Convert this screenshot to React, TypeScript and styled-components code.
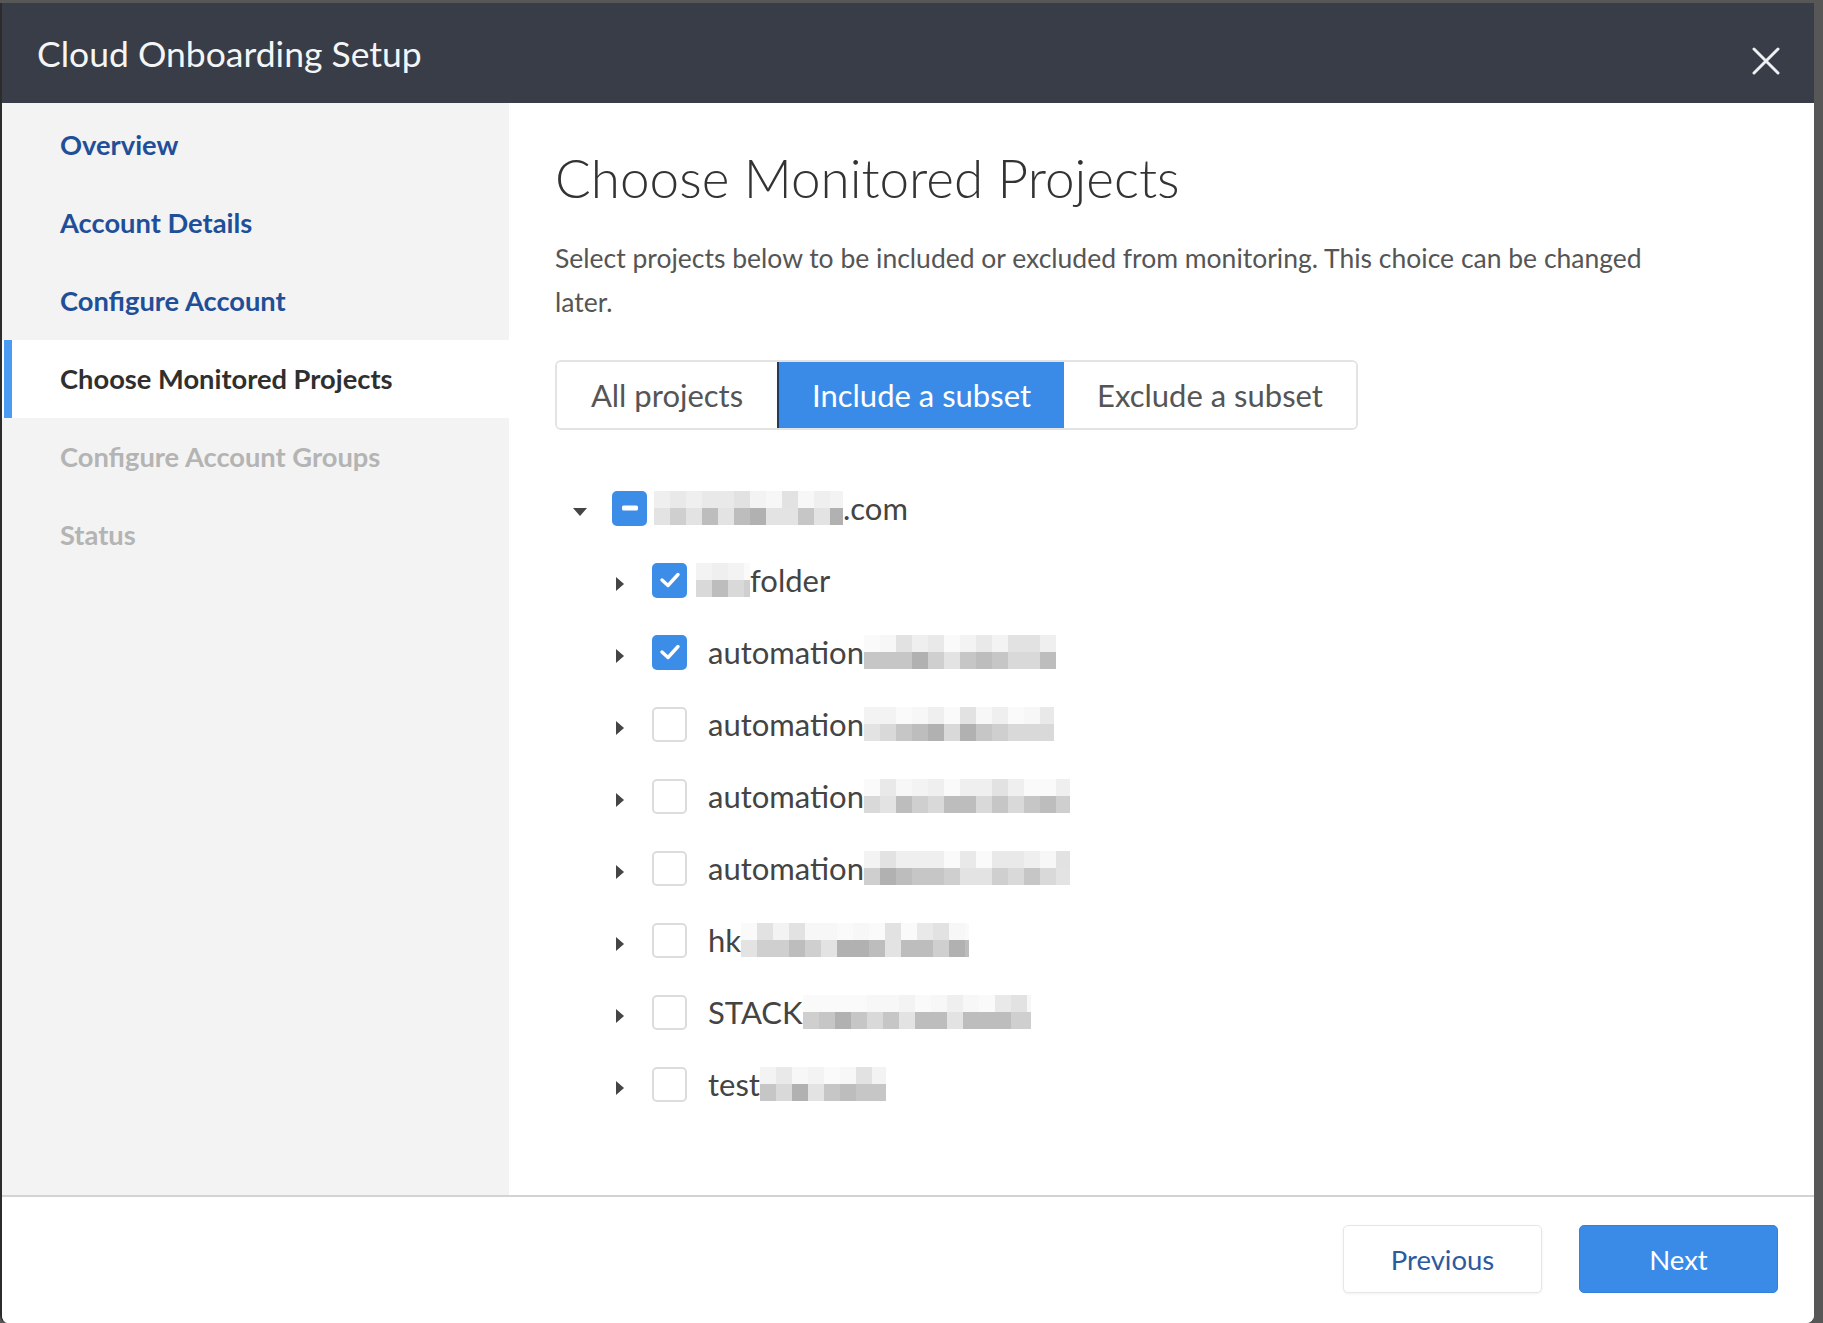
import React from "react";
import styled, { createGlobalStyle, css } from "styled-components";

const GlobalStyle = createGlobalStyle`
  html, body { margin: 0; padding: 0; }
  body {
    background: #575757;
    font-family: Lato, "Open Sans", "Liberation Sans", sans-serif;
    -webkit-font-smoothing: antialiased;
  }
  * { box-sizing: border-box; }
`;

const Backdrop = styled.div`
  width: 1823px;
  height: 1323px;
  padding-top: 3px;
  background: #575757;
  overflow: hidden;
`;

const Dialog = styled.div`
  width: 1814px;
  height: 1320px;
  display: flex;
  flex-direction: column;
  background: #ffffff;
  border-left: 2px solid #2c2c2c;
  border-radius: 0 0 8px 8px;
  overflow: hidden;
`;

const Header = styled.header`
  height: 100px;
  flex: none;
  display: flex;
  align-items: center;
  justify-content: space-between;
  padding: 0 34px 0 35px;
  background: #383d47;
`;

const Title = styled.h1`
  margin: 0;
  font-size: 35.5px;
  font-weight: 400;
  color: #f4f5f7;
`;

const CloseButton = styled.button`
  border: 0;
  padding: 0;
  margin-top: 16px;
  background: transparent;
  width: 28px;
  height: 28px;
  display: flex;
  align-items: center;
  justify-content: center;
  cursor: pointer;
`;

const Body = styled.div`
  flex: 1;
  display: flex;
  min-height: 0;
`;

const Sidebar = styled.nav`
  width: 507px;
  flex: none;
  padding-top: 3px;
  background: #f3f3f3;
  display: flex;
  flex-direction: column;
`;

type NavState = "link" | "active" | "disabled";

const NavItem = styled.div<{ $state: NavState }>`
  position: relative;
  height: 78px;
  display: flex;
  align-items: center;
  padding-left: 58px;
  padding-bottom: 1px;
  font-size: 27.3px;
  font-weight: 700;
  color: ${(p) =>
    p.$state === "active" ? "#2f2f2f" : p.$state === "disabled" ? "#b4b4b4" : "#1f4f98"};
  ${(p) =>
    p.$state === "active" &&
    css`
      background: #ffffff;
      &::before {
        content: "";
        position: absolute;
        left: 2px;
        top: 0;
        bottom: 0;
        width: 8px;
        background: #4c9bf3;
      }
    `}
`;

const Main = styled.main`
  flex: 1;
  padding: 43px 46px 0 46px;
  background: #ffffff;
`;

const PageTitle = styled.h2`
  margin: 0;
  font-size: 53px;
  line-height: 64px;
  font-weight: 300;
  color: #333333;
`;

const Description = styled.p`
  margin: 26px 0 0;
  width: 1120px;
  font-size: 26.5px;
  line-height: 44px;
  color: #555555;
`;

const Segmented = styled.div`
  margin-top: 36px;
  display: inline-flex;
  border: 2px solid #e3e3e3;
  border-radius: 6px;
  overflow: hidden;
`;

const Segment = styled.button<{ $selected?: boolean; $w: number }>`
  height: 66px;
  width: ${(p) => p.$w}px;
  border: 0;
  padding: 0;
  font-family: inherit;
  font-size: 31px;
  color: #555555;
  background: #ffffff;
  ${(p) =>
    p.$selected &&
    css`
      background: #3a8be8;
      color: #ffffff;
      border-left: 2px solid #243a5c;
    `}
`;

const Tree = styled.div`
  margin-top: 42px;
  display: flex;
  flex-direction: column;
`;

const Row = styled.div<{ $indent: number }>`
  height: 72px;
  display: flex;
  align-items: center;
  padding-left: ${(p) => p.$indent}px;
`;

const CaretBox = styled.span`
  width: 20px;
  height: 20px;
  margin-top: 8px;
  display: flex;
  align-items: center;
  justify-content: center;
  flex: none;
`;

const Box = styled.span<{ $on: boolean }>`
  width: 35px;
  height: 35px;
  flex: none;
  margin-left: 22px;
  border-radius: 5px;
  display: flex;
  align-items: center;
  justify-content: center;
  ${(p) =>
    p.$on
      ? css`
          background: #3b8de8;
        `
      : css`
          background: #ffffff;
          border: 2px solid #dcdcdc;
        `}
`;

const Label = styled.span<{ $gap: number }>`
  margin-left: ${(p) => p.$gap}px;
  display: flex;
  align-items: center;
  font-size: 31px;
  color: #444444;
  white-space: nowrap;
`;

const MosaicSvg = styled.svg`
  display: block;
  flex: none;
`;

const Footer = styled.footer`
  height: 128px;
  flex: none;
  border-top: 2px solid #d3d3d3;
  display: flex;
  justify-content: flex-end;
  gap: 37px;
  padding: 28px 36px 0 0;
  background: #ffffff;
`;

const FooterButton = styled.button<{ $primary?: boolean }>`
  width: 199px;
  height: 68px;
  border-radius: 5px;
  font-family: inherit;
  font-size: 27.5px;
  cursor: pointer;
  ${(p) =>
    p.$primary
      ? css`
          background: #3a8be8;
          color: #ffffff;
          border: 1px solid #3380dc;
        `
      : css`
          background: #ffffff;
          color: #2c5a9e;
          border: 1px solid #e6e6e6;
          box-shadow: 0 1px 3px rgba(0, 0, 0, 0.06);
        `}
`;

const Caret = ({ open }: { open: boolean }) =>
  open ? (
    <svg width="14" height="8" viewBox="0 0 14 8">
      <polygon points="0,0 14,0 7,8" fill="#454545" />
    </svg>
  ) : (
    <svg width="8" height="14" viewBox="0 0 8 14">
      <polygon points="0,0 8,7 0,14" fill="#454545" />
    </svg>
  );

type CheckState = "on" | "off" | "mixed";

const Check = ({ state }: { state: CheckState }) => (
  <Box $on={state !== "off"}>
    {state === "on" && (
      <svg width="22" height="18" viewBox="0 0 22 18">
        <polyline
          points="3,9 9,14.5 19,3.5"
          fill="none"
          stroke="#ffffff"
          strokeWidth="3.4"
          strokeLinecap="round"
          strokeLinejoin="round"
        />
      </svg>
    )}
    {state === "mixed" && (
      <svg width="16" height="6" viewBox="0 0 16 6">
        <rect x="0" y="0.5" width="16" height="5" rx="1.5" fill="#ffffff" />
      </svg>
    )}
  </Box>
);

const Mosaic = ({ width, seed }: { width: number; seed: number }) => {
  const cell = 16;
  const cols = Math.ceil(width / cell);
  let s = seed * 9301 + 49297;
  const rnd = () => {
    s = (s * 9301 + 49297) % 233280;
    return s / 233280;
  };
  const top = ["#f7f7f7", "#efefef", "#e9e9e9", "#f3f3f3", "#e2e2e2", "#fafafa"];
  const bottom = ["#d9d9d9", "#c6c6c6", "#bdbdbd", "#cfcfcf", "#b1b1b1", "#e3e3e3"];
  const rects: React.ReactNode[] = [];
  for (let i = 0; i < cols; i++) {
    rects.push(
      <rect key={`t${i}`} x={i * cell} y={0} width={cell} height={17} fill={top[Math.floor(rnd() * top.length)]} />
    );
    rects.push(
      <rect key={`b${i}`} x={i * cell} y={17} width={cell} height={17} fill={bottom[Math.floor(rnd() * bottom.length)]} />
    );
  }
  return (
    <MosaicSvg width={width} height={34} viewBox={`0 0 ${width} 34`}>
      {rects}
    </MosaicSvg>
  );
};

type TreeItem = {
  indent: number;
  open: boolean;
  state: CheckState;
  gap: number;
  before?: number;
  text: string;
  after?: number;
  seed: number;
};

const items: TreeItem[] = [
  { indent: 15, open: true, state: "mixed", gap: 7, before: 189, text: ".com", seed: 3 },
  { indent: 55, open: false, state: "on", gap: 9, before: 54, text: "folder", seed: 7 },
  { indent: 55, open: false, state: "on", gap: 21, text: "automation", after: 192, seed: 11 },
  { indent: 55, open: false, state: "off", gap: 21, text: "automation", after: 190, seed: 13 },
  { indent: 55, open: false, state: "off", gap: 21, text: "automation", after: 206, seed: 17 },
  { indent: 55, open: false, state: "off", gap: 21, text: "automation", after: 206, seed: 19 },
  { indent: 55, open: false, state: "off", gap: 21, text: "hk", after: 228, seed: 23 },
  { indent: 55, open: false, state: "off", gap: 21, text: "STACK", after: 228, seed: 29 },
  { indent: 55, open: false, state: "off", gap: 21, text: "test", after: 126, seed: 31 },
];

const navItems: { label: string; state: NavState }[] = [
  { label: "Overview", state: "link" },
  { label: "Account Details", state: "link" },
  { label: "Configure Account", state: "link" },
  { label: "Choose Monitored Projects", state: "active" },
  { label: "Configure Account Groups", state: "disabled" },
  { label: "Status", state: "disabled" },
];

export default function App() {
  return (
    <>
      <GlobalStyle />
      <Backdrop>
        <Dialog>
          <Header>
            <Title>Cloud Onboarding Setup</Title>
            <CloseButton aria-label="Close">
              <svg width="28" height="28" viewBox="0 0 28 28">
                <path d="M2 2 L26 26 M26 2 L2 26" stroke="#eef0f3" strokeWidth="3" strokeLinecap="round" />
              </svg>
            </CloseButton>
          </Header>
          <Body>
            <Sidebar>
              {navItems.map((n) => (
                <NavItem key={n.label} $state={n.state}>
                  {n.label}
                </NavItem>
              ))}
            </Sidebar>
            <Main>
              <PageTitle>Choose Monitored Projects</PageTitle>
              <Description>
                Select projects below to be included or excluded from monitoring. This choice can be changed later.
              </Description>
              <Segmented>
                <Segment $w={220}>All projects</Segment>
                <Segment $w={287} $selected>
                  Include a subset
                </Segment>
                <Segment $w={292}>Exclude a subset</Segment>
              </Segmented>
              <Tree>
                {items.map((it, i) => (
                  <Row key={i} $indent={it.indent}>
                    <CaretBox>
                      <Caret open={it.open} />
                    </CaretBox>
                    <Check state={it.state} />
                    <Label $gap={it.gap}>
                      {it.before ? <Mosaic width={it.before} seed={it.seed} /> : null}
                      {it.text}
                      {it.after ? <Mosaic width={it.after} seed={it.seed} /> : null}
                    </Label>
                  </Row>
                ))}
              </Tree>
            </Main>
          </Body>
          <Footer>
            <FooterButton>Previous</FooterButton>
            <FooterButton $primary>Next</FooterButton>
          </Footer>
        </Dialog>
      </Backdrop>
    </>
  );
}
